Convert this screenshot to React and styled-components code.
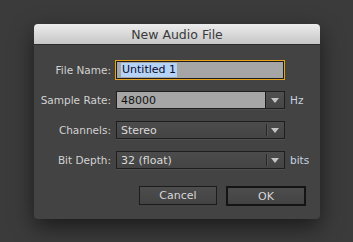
import React from "react";
import styled, { createGlobalStyle } from "styled-components";

const GlobalStyle = createGlobalStyle`
  html, body {
    margin: 0;
    padding: 0;
    background: #3b3b3b;
    font-family: "DejaVu Sans", "Liberation Sans", sans-serif;
  }
`;

const Page = styled.div`
  width: 353px;
  height: 242px;
  padding: 24px 0 0 34px;
  box-sizing: border-box;
  background: #3b3b3b;
`;

const Dialog = styled.div`
  width: 286px;
  height: 195px;
  display: flex;
  flex-direction: column;
  background: #434343;
  border-radius: 4px;
  box-shadow: 0 8px 22px rgba(0, 0, 0, 0.55);
  overflow: hidden;
`;

const TitleBar = styled.div`
  height: 21px;
  display: flex;
  align-items: center;
  justify-content: center;
  background: linear-gradient(#ececec, #c6c6c6);
  border-bottom: 1px solid #2c2c2c;
  box-sizing: border-box;
  color: #3a3a3a;
  font-size: 12.5px;
`;

const Body = styled.div`
  flex: 1;
  display: flex;
  flex-direction: column;
  padding: 15px 14px 0 0;
`;

const Form = styled.div`
  display: grid;
  grid-template-columns: 77px 170px auto;
  grid-auto-rows: 20px;
  column-gap: 4px;
  row-gap: 10px;
  align-items: center;
`;

const Label = styled.div`
  text-align: right;
  color: #d2d2d2;
  font-size: 10.5px;
`;

const Unit = styled.div`
  color: #c6d2e0;
  font-size: 10.5px;
  padding-left: 1px;
`;

const TextField = styled.div`
  height: 20px;
  box-sizing: border-box;
  border: 1px solid #e6a21c;
  display: flex;
`;

const TextInner = styled.div`
  flex: 1;
  border: 1px solid #1c1c1c;
  background: #a6a6a6;
  display: flex;
  align-items: center;
  padding-left: 4px;
  font-size: 11px;
  color: #0a0a2a;
`;

const Selected = styled.span`
  background: #b4d3f7;
  padding: 0 1px;
  line-height: 14px;
`;

const Combo = styled.div`
  height: 18px;
  margin-left: 1px;
  width: 169px;
  box-sizing: border-box;
  border: 1px solid #1e1e1e;
  display: flex;
  background: ${(p) => (p.$editable ? "#a6a6a6" : "linear-gradient(#4c4c4c, #444)")};
  box-shadow: 0 1px 0 rgba(255, 255, 255, 0.06);
`;

const ComboValue = styled.div`
  flex: 1;
  display: flex;
  align-items: center;
  padding-left: 4px;
  font-size: 11px;
  color: ${(p) => (p.$editable ? "#111" : "#dadada")};
`;

const ComboButton = styled.div`
  width: 18px;
  display: flex;
  align-items: center;
  justify-content: center;
  position: relative;
  background: ${(p) => (p.$editable ? "linear-gradient(#505050, #464646)" : "transparent")};
  border-left: ${(p) => (p.$editable ? "1px solid #1e1e1e" : "none")};
`;

const Divider = styled.div`
  position: absolute;
  left: 0;
  top: 2px;
  bottom: 2px;
  width: 1px;
  background: #262626;
  box-shadow: 1px 0 0 #555;
`;

const Arrow = styled.div`
  width: 0;
  height: 0;
  border-left: 4px solid transparent;
  border-right: 4px solid transparent;
  border-top: 5px solid #c4c4c4;
`;

const Buttons = styled.div`
  display: flex;
  justify-content: flex-end;
  gap: 9px;
  margin-top: 16px;
`;

const Button = styled.div`
  width: ${(p) => (p.$primary ? "80px" : "78px")};
  height: ${(p) => (p.$primary ? "20px" : "19px")};
  box-sizing: border-box;
  border: ${(p) => (p.$primary ? "2px solid #141414" : "1px solid #1c1c1c")};
  background: linear-gradient(#4d4d4d, #434343);
  display: flex;
  align-items: center;
  justify-content: center;
  color: #d6d6d6;
  font-size: 11px;
`;

const Select = ({ value, editable }) => (
  <Combo $editable={editable}>
    <ComboValue $editable={editable}>{value}</ComboValue>
    <ComboButton $editable={editable}>
      {!editable && <Divider />}
      <Arrow />
    </ComboButton>
  </Combo>
);

export default function App() {
  return (
    <Page>
      <GlobalStyle />
      <Dialog>
        <TitleBar>New Audio File</TitleBar>
        <Body>
          <Form>
            <Label>File Name:</Label>
            <TextField>
              <TextInner>
                <Selected>Untitled 1</Selected>
              </TextInner>
            </TextField>
            <div />

            <Label>Sample Rate:</Label>
            <Select value="48000" editable />
            <Unit>Hz</Unit>

            <Label>Channels:</Label>
            <Select value="Stereo" />
            <div />

            <Label>Bit Depth:</Label>
            <Select value="32 (float)" />
            <Unit>bits</Unit>
          </Form>
          <Buttons>
            <Button>Cancel</Button>
            <Button $primary>OK</Button>
          </Buttons>
        </Body>
      </Dialog>
    </Page>
  );
}
